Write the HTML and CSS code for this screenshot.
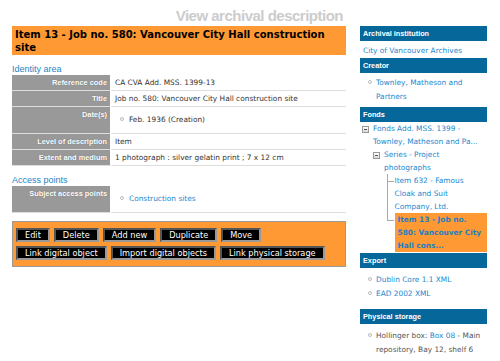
FILE: index.html
```html
<!DOCTYPE html>
<html lang="en">
<head>
    <meta charset="UTF-8">
    <title>Item 13 - Job no. 580: Vancouver City Hall construction site</title>
    <link rel="stylesheet" href="styles.css">
</head>
<body>
<div id="page">
    <h1 id="page-title">View archival description</h1>

    <div id="main">
        <h2 class="record-title">Item 13 - Job no. 580: Vancouver City Hall construction site</h2>

        <h3 class="area-title">Identity area</h3>
        <table class="fields">
            <tr><th>Reference code</th><td>CA CVA Add. MSS. 1399-13</td></tr>
            <tr><th>Title</th><td>Job no. 580: Vancouver City Hall construction site</td></tr>
            <tr><th>Date(s)</th><td><ul class="bullets"><li>Feb. 1936 (Creation)</li></ul></td></tr>
            <tr><th>Level of description</th><td>Item</td></tr>
            <tr><th>Extent and medium</th><td>1 photograph : silver gelatin print ; 7 x 12 cm</td></tr>
        </table>

        <h3 class="area-title">Access points</h3>
        <table class="fields">
            <tr><th>Subject access points</th><td><ul class="bullets"><li><a href="#">Construction sites</a></li></ul></td></tr>
        </table>

        <div class="actions">
            <button>Edit</button>
            <button>Delete</button>
            <button>Add new</button>
            <button>Duplicate</button>
            <button>Move</button>
            <button>Link digital object</button>
            <button>Import digital objects</button>
            <button>Link physical storage</button>
        </div>
    </div>

    <div id="sidebar">
        <h4 class="side-head">Archival institution</h4>
        <p class="side-text"><a href="#">City of Vancouver Archives</a></p>

        <h4 class="side-head">Creator</h4>
        <ul class="bullets side-list creator">
            <li><a href="#">Townley, Matheson and Partners</a></li>
        </ul>

        <h4 class="side-head">Fonds</h4>
        <ul class="tree">
            <li class="node">
                <span class="toggle"></span>
                <div class="node-body">
                    <a href="#">Fonds Add. MSS. 1399 - <span class="nowrap">Townley, Matheson and Pa...</span></a>
                    <ul>
                        <li class="node">
                            <span class="toggle"></span>
                            <div class="node-body">
                                <a href="#">Series - Project photographs</a>
                                <ul class="leaves">
                                    <li><a href="#">Item 632 - Famous Cloak and Suit Company, Ltd.</a></li>
                                    <li><span class="current">Item 13 - Job no. 580: Vancouver City Hall cons...</span></li>
                                </ul>
                            </div>
                        </li>
                    </ul>
                </div>
            </li>
        </ul>

        <h4 class="side-head">Export</h4>
        <ul class="bullets side-list export">
            <li><a href="#">Dublin Core 1.1 XML</a></li>
            <li><a href="#">EAD 2002 XML</a></li>
        </ul>

        <h4 class="side-head">Physical storage</h4>
        <ul class="bullets side-list storage">
            <li>Hollinger box: <a href="#">Box 08</a> - Main<br>repository, Bay 12, shelf 6</li>
        </ul>
    </div>
</div>
</body>
</html>
```

FILE: styles.css
```css
*{
    margin: 0;
    padding: 0;
}
ul{
    list-style: none;
}
body{
    font-family: "DejaVu Sans", Verdana, sans-serif;
    font-size: 7.4px;
    line-height: 12px;
    color: #333;
    background: #fff;
}
a{
    color: #1c88cf;
    text-decoration: none;
}

#page{
    display: grid;
    grid-template-columns: 334px 127px;
    column-gap: 14px;
    padding: 7px 12px 0;
}
#page-title{
    grid-column: 1;
    font: bold 15px/18px "Liberation Sans", Arial, sans-serif;
    letter-spacing: -0.5px;
    color: #ccc;
    text-align: right;
    padding-right: 3px;
}
#main{
    grid-column: 1;
    padding-top: 1px;
}
#sidebar{
    grid-column: 2;
    margin-top: 1px;
}

.record-title{
    background: #f93;
    color: #000;
    font: bold 10px/13px "DejaVu Sans", Verdana, sans-serif;
    padding: 2px 3px 1px;
}
.area-title{
    font: normal 9px/12px "Liberation Sans", Arial, sans-serif;
    color: #2585c6;
    margin-top: 8px;
}

/* field table */
.fields{
    width: 100%;
    border-collapse: separate;
    border-spacing: 0;
}
.fields th{
    width: 92px;
    background: #999;
    color: #fff;
    font: bold 7.4px/11px "Liberation Sans", Arial, sans-serif;
    text-shadow: 0 0 1px #666;
    text-align: right;
    vertical-align: top;
    padding: 2px 3px;
    border-right: 2px solid #fff;
    border-bottom: 1px solid #ddd;
}
.fields td{
    line-height: 11px;
    padding: 2px 3px;
    border-bottom: 1px solid #ddd;
}
.fields .bullets{
    margin: 5px 0 6px;
}

/* circle bullets, hanging indent */
.bullets li{
    padding-left: 14px;
}
.bullets li::before{
    content: "";
    display: inline-block;
    width: 2px;
    height: 2px;
    border: 1px solid #bbb;
    border-radius: 50%;
    margin: 0 5px 0 -9px;
    vertical-align: 1px;
}
.side-list li{
    padding-left: 16px;
}
.side-list li::before{
    margin: 0 4px 0 -8px;
}

/* actions */
.actions{
    margin-top: 8px;
    background: #f93;
    border: 1px solid #999;
    padding: 6px 3px;
    display: flex;
    flex-wrap: wrap;
    gap: 4px;
}
.actions button{
    height: 14px;
    background: #000;
    color: #fff;
    font: 8.2px/10px "DejaVu Sans", Verdana, sans-serif;
    padding: 0 7px;
    border: 2px solid;
    border-color: #555 #999 #999 #555;
    cursor: pointer;
}

/* sidebar */
.side-head{
    background: #06679b;
    color: #fff;
    font: bold 7.3px/15px "Liberation Sans", Arial, sans-serif;
    padding-left: 3px;
}
.side-text{
    line-height: 13px;
    margin: 2.5px 0 1.5px;
    padding-left: 3px;
}
.side-list{
    line-height: 13.5px;
}
.creator{
    margin: 3px 0 4px;
}
.export{
    margin: 5px 0 9px;
}
.storage{
    margin: 5px 0;
    color: #555;
}

/* fonds tree */
.tree{
    line-height: 13px;
    padding-left: 2px;
    margin-bottom: 1px;
}
.node{
    display: flex;
}
.toggle{
    flex: none;
    width: 5px;
    height: 5px;
    margin: 4px 4px 0 0;
    border: 1px solid #999;
    background: linear-gradient(#555, #555) center / 3px 1px no-repeat, linear-gradient(#fff, #d8d8d8);
}
.node-body{
    flex: 1;
    min-width: 0;
}
.nowrap{
    white-space: nowrap;
}
.leaves{
    margin-left: 2.5px;
}
.leaves li{
    display: flex;
}
.leaves li::before{
    content: "";
    flex: none;
    width: 6px;
    height: 6.5px;
    border-left: 1px solid #aaa;
    border-bottom: 1px solid #aaa;
    margin-right: 1px;
}
.leaves li:not(:last-child){
    border-left: 1px solid #aaa;
    padding-right: 4px;
}
.leaves li:not(:last-child)::before{
    border-left: none;
}
.current{
    flex: 1;
    background: #f93;
    color: #1c7fc4;
    font-weight: bold;
    padding: 0 3px;
}
```
